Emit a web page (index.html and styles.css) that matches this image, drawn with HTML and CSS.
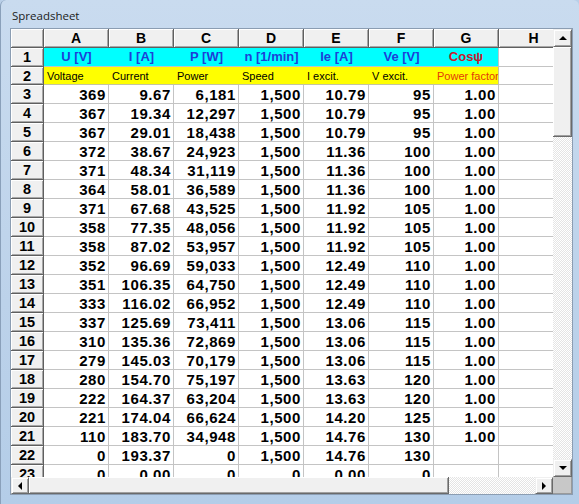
FILE: index.html
```html
<!DOCTYPE html>
<html>
<head>
<meta charset="utf-8">
<link rel="stylesheet" href="styles.css">
</head>
<body>
<div class="window">
  <div class="title">Spreadsheet</div>
  <div class="client">
    <div class="main">
      <div class="sheet">
        <div class="row hdr-row">
          <div class="hc"></div><div class="hc">A</div><div class="hc">B</div><div class="hc">C</div><div class="hc">D</div><div class="hc">E</div><div class="hc">F</div><div class="hc">G</div><div class="hc">H</div>
        </div>
        <div class="row units">
          <div class="rh">1</div><div class="u">U [V]</div><div class="u">I [A]</div><div class="u">P [W]</div><div class="u">n [1/min]</div><div class="u">Ie [A]</div><div class="u">Ve [V]</div><div class="u red">Cosψ</div><div class="c"></div>
        </div>
        <div class="row names">
          <div class="rh">2</div><div class="n">Voltage</div><div class="n">Current</div><div class="n">Power</div><div class="n">Speed</div><div class="n">I excit.</div><div class="n">V excit.</div><div class="n orange">Power factor</div><div class="c"></div>
        </div>
        <div class="row"><div class="rh">3</div><div class="c">369</div><div class="c">9.67</div><div class="c">6,181</div><div class="c">1,500</div><div class="c">10.79</div><div class="c">95</div><div class="c">1.00</div><div class="c"></div></div>
        <div class="row"><div class="rh">4</div><div class="c">367</div><div class="c">19.34</div><div class="c">12,297</div><div class="c">1,500</div><div class="c">10.79</div><div class="c">95</div><div class="c">1.00</div><div class="c"></div></div>
        <div class="row"><div class="rh">5</div><div class="c">367</div><div class="c">29.01</div><div class="c">18,438</div><div class="c">1,500</div><div class="c">10.79</div><div class="c">95</div><div class="c">1.00</div><div class="c"></div></div>
        <div class="row"><div class="rh">6</div><div class="c">372</div><div class="c">38.67</div><div class="c">24,923</div><div class="c">1,500</div><div class="c">11.36</div><div class="c">100</div><div class="c">1.00</div><div class="c"></div></div>
        <div class="row"><div class="rh">7</div><div class="c">371</div><div class="c">48.34</div><div class="c">31,119</div><div class="c">1,500</div><div class="c">11.36</div><div class="c">100</div><div class="c">1.00</div><div class="c"></div></div>
        <div class="row"><div class="rh">8</div><div class="c">364</div><div class="c">58.01</div><div class="c">36,589</div><div class="c">1,500</div><div class="c">11.36</div><div class="c">100</div><div class="c">1.00</div><div class="c"></div></div>
        <div class="row"><div class="rh">9</div><div class="c">371</div><div class="c">67.68</div><div class="c">43,525</div><div class="c">1,500</div><div class="c">11.92</div><div class="c">105</div><div class="c">1.00</div><div class="c"></div></div>
        <div class="row"><div class="rh">10</div><div class="c">358</div><div class="c">77.35</div><div class="c">48,056</div><div class="c">1,500</div><div class="c">11.92</div><div class="c">105</div><div class="c">1.00</div><div class="c"></div></div>
        <div class="row"><div class="rh">11</div><div class="c">358</div><div class="c">87.02</div><div class="c">53,957</div><div class="c">1,500</div><div class="c">11.92</div><div class="c">105</div><div class="c">1.00</div><div class="c"></div></div>
        <div class="row"><div class="rh">12</div><div class="c">352</div><div class="c">96.69</div><div class="c">59,033</div><div class="c">1,500</div><div class="c">12.49</div><div class="c">110</div><div class="c">1.00</div><div class="c"></div></div>
        <div class="row"><div class="rh">13</div><div class="c">351</div><div class="c">106.35</div><div class="c">64,750</div><div class="c">1,500</div><div class="c">12.49</div><div class="c">110</div><div class="c">1.00</div><div class="c"></div></div>
        <div class="row"><div class="rh">14</div><div class="c">333</div><div class="c">116.02</div><div class="c">66,952</div><div class="c">1,500</div><div class="c">12.49</div><div class="c">110</div><div class="c">1.00</div><div class="c"></div></div>
        <div class="row"><div class="rh">15</div><div class="c">337</div><div class="c">125.69</div><div class="c">73,411</div><div class="c">1,500</div><div class="c">13.06</div><div class="c">115</div><div class="c">1.00</div><div class="c"></div></div>
        <div class="row"><div class="rh">16</div><div class="c">310</div><div class="c">135.36</div><div class="c">72,869</div><div class="c">1,500</div><div class="c">13.06</div><div class="c">115</div><div class="c">1.00</div><div class="c"></div></div>
        <div class="row"><div class="rh">17</div><div class="c">279</div><div class="c">145.03</div><div class="c">70,179</div><div class="c">1,500</div><div class="c">13.06</div><div class="c">115</div><div class="c">1.00</div><div class="c"></div></div>
        <div class="row"><div class="rh">18</div><div class="c">280</div><div class="c">154.70</div><div class="c">75,197</div><div class="c">1,500</div><div class="c">13.63</div><div class="c">120</div><div class="c">1.00</div><div class="c"></div></div>
        <div class="row"><div class="rh">19</div><div class="c">222</div><div class="c">164.37</div><div class="c">63,204</div><div class="c">1,500</div><div class="c">13.63</div><div class="c">120</div><div class="c">1.00</div><div class="c"></div></div>
        <div class="row"><div class="rh">20</div><div class="c">221</div><div class="c">174.04</div><div class="c">66,624</div><div class="c">1,500</div><div class="c">14.20</div><div class="c">125</div><div class="c">1.00</div><div class="c"></div></div>
        <div class="row"><div class="rh">21</div><div class="c">110</div><div class="c">183.70</div><div class="c">34,948</div><div class="c">1,500</div><div class="c">14.76</div><div class="c">130</div><div class="c">1.00</div><div class="c"></div></div>
        <div class="row"><div class="rh">22</div><div class="c">0</div><div class="c">193.37</div><div class="c">0</div><div class="c">1,500</div><div class="c">14.76</div><div class="c">130</div><div class="c"></div><div class="c"></div></div>
        <div class="row"><div class="rh">23</div><div class="c">0</div><div class="c">0.00</div><div class="c">0</div><div class="c">0</div><div class="c">0.00</div><div class="c">0</div><div class="c"></div><div class="c"></div></div>
      </div>
      <div class="vscroll">
        <div class="btn"><span class="tri up"></span></div>
        <div class="vthumb"></div>
        <div class="track"></div>
        <div class="btn"><span class="tri down"></span></div>
      </div>
    </div>
    <div class="hscroll">
      <div class="btn"><span class="tri left"></span></div>
      <div class="hthumb"></div>
      <div class="track"></div>
      <div class="btn"><span class="tri right"></span></div>
      <div class="corner"></div>
    </div>
  </div>
</div>
</body>
</html>
```

FILE: styles.css
```css
html, body {
  margin: 0;
  padding: 0;
}
body {
  width: 579px;
  height: 504px;
  overflow: hidden;
  background: #b9cfe8;
}
.window {
  width: 579px;
  height: 504px;
  box-sizing: border-box;
  padding: 0 6px 9px 9px;
  display: flex;
  flex-direction: column;
  background: linear-gradient(#c9dbef, #bcd2ea 60%, #b4cde8);
  border-left: 1px solid #8aa0ba;
  border-radius: 6px 6px 0 0;
}
.title {
  height: 28px;
  box-sizing: border-box;
  padding: 8px 0 0 2px;
  font-family: "Open Sans", "Liberation Sans", sans-serif;
  font-size: 11.5px;
  color: #1c1c1c;
}
.client {
  border: 1px solid #8b9db2;
  background: #ffffff;
  display: flex;
  flex-direction: column;
}
.main {
  display: flex;
  height: 448px;
}
.sheet {
  width: 543px;
  overflow: hidden;
  background: #fff;
}
.row {
  display: grid;
  grid-template-columns: 33px repeat(7, 65px) 70px;
  height: 19px;
}
.row.names {
  height: 18px;
}
.row > div {
  box-sizing: border-box;
  overflow: hidden;
  white-space: nowrap;
  font-family: "Liberation Sans", Arial, sans-serif;
}
.hc, .rh {
  background: #f0f0f0;
  border-right: 1px solid #5f5f5f;
  border-bottom: 1px solid #5f5f5f;
  box-shadow: inset 1px 1px 0 #ffffff, inset -1px -1px 0 #a8a8a8;
  font-weight: bold;
  font-size: 14px;
  color: #000;
  text-align: center;
  line-height: 18px;
}
.rh {
  font-size: 14.5px;
}
.c {
  border-right: 1px solid #c4c4c4;
  border-bottom: 1px solid #c4c4c4;
  text-align: right;
  font-weight: bold;
  font-size: 15px;
  letter-spacing: 0.6px;
  line-height: 19px;
  padding-right: 2px;
  color: #000;
}
.u {
  background: #00ffff;
  border-bottom: 1px solid #b8c8c8;
  color: #1d3fd8;
  font-weight: bold;
  font-size: 13px;
  text-align: center;
  line-height: 18px;
}
.u.red {
  color: #c8182c;
  border-right: 1px solid #b8c8c8;
}
.n {
  background: #ffff00;
  border-bottom: 1px solid #c4c4a0;
  color: #000;
  font-size: 11px;
  line-height: 18px;
  padding-left: 3px;
}
.n.orange {
  color: #e23a08;
  border-right: 1px solid #c4c4a0;
}
.vscroll {
  width: 19px;
  display: flex;
  flex-direction: column;
}
.btn {
  flex: none;
  width: 18px;
  height: 17px;
  box-sizing: border-box;
  background: #f0f0f0;
  border-top: 1px solid #f0f0f0;
  border-left: 1px solid #f0f0f0;
  border-right: 1px solid #6a6a6a;
  border-bottom: 1px solid #6a6a6a;
  box-shadow: inset 1px 1px 0 #ffffff, inset -1px -1px 0 #a0a0a0;
  display: flex;
  align-items: center;
  justify-content: center;
}
.vscroll .btn {
  width: 19px;
  height: 18px;
}
.vthumb {
  height: 90px;
  flex: none;
  box-sizing: border-box;
  background: #f0f0f0;
  border-right: 1px solid #6a6a6a;
  border-bottom: 1px solid #6a6a6a;
  box-shadow: inset 1px 1px 0 #ffffff, inset -1px -1px 0 #a0a0a0;
}
.track {
  flex: 1;
  background-color: #ffffff;
  background-image: repeating-conic-gradient(#e4e4e4 0 25%, #ffffff 0 50%);
  background-size: 2px 2px;
}
.tri {
  width: 0;
  height: 0;
  border: 4px solid transparent;
}
.tri.up {
  border-bottom-color: #000;
  border-top-width: 0;
  margin-top: -1px;
}
.tri.down {
  border-top-color: #000;
  border-bottom-width: 0;
}
.tri.left {
  border-right-color: #000;
  border-left-width: 0;
}
.tri.right {
  border-left-color: #000;
  border-right-width: 0;
}
.hscroll {
  display: flex;
  height: 17px;
}
.hthumb {
  width: 420px;
  flex: none;
  box-sizing: border-box;
  background: #f0f0f0;
  border-right: 1px solid #6a6a6a;
  border-bottom: 1px solid #6a6a6a;
  box-shadow: inset 1px 1px 0 #ffffff, inset -1px -1px 0 #a0a0a0;
}
.corner {
  width: 19px;
  flex: none;
  background: #c8c8c8;
  box-sizing: border-box;
  border-right: 1px solid #9a9a9a;
  border-bottom: 1px solid #9a9a9a;
}
```
